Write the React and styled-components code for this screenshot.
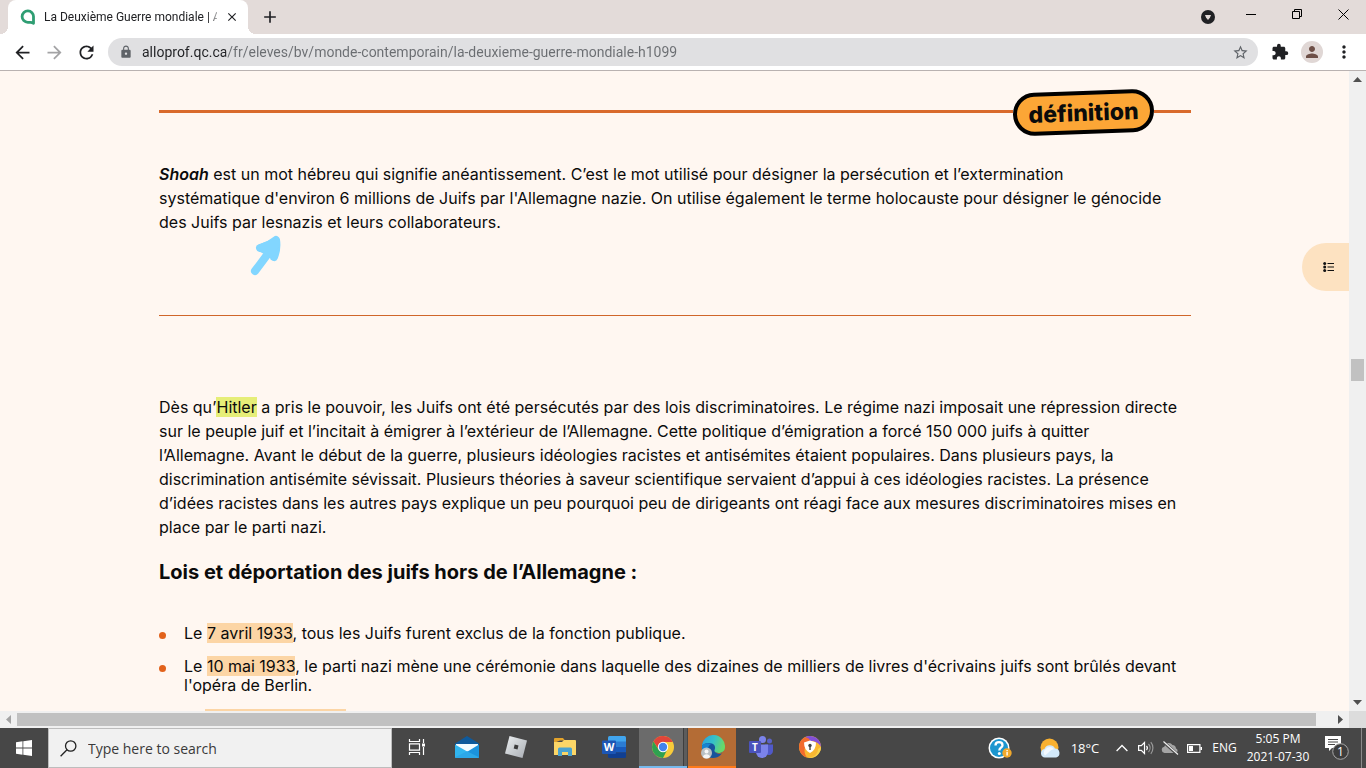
import React from 'react'
import styled, { createGlobalStyle } from 'styled-components'
import {
  MdAdd,
  MdArrowBack,
  MdArrowForward,
  MdClose,
  MdExtension,
  MdLock,
  MdMoreVert,
  MdPerson,
  MdRefresh,
  MdStarBorder,
} from 'react-icons/md'

const GlobalStyle = createGlobalStyle`
  * {
    box-sizing: border-box;
  }

  body {
    margin: 0;
    font-family: 'Open Sans', 'Noto Sans', sans-serif;
    font-size: 12px;
    color: #202124;
  }

  button {
    border: none;
    padding: 0;
    background: none;
    color: inherit;
    font: inherit;
  }

  svg {
    display: block;
    flex: none;
  }
`

const Screen = styled.div`
  height: 100vh;
  display: flex;
  flex-direction: column;
  overflow: hidden;
`

/* Browser frame */

const TitleBar = styled.header`
  height: 34px;
  flex: none;
  display: flex;
  background: #e3dbd9;
`

const TabFoot = styled.span`
  width: 8px;
  height: 8px;
  align-self: flex-end;
  background: radial-gradient(circle at ${props => props.$corner}, #e3dbd9 8px, #fff 8px);
`

const Tab = styled.div`
  width: 240px;
  padding: 0 9px 0 12px;
  display: flex;
  align-items: center;
  gap: 8px;
  background: #fff;
  border-radius: 8px 8px 0 0;
`

const TabTitle = styled.span`
  flex: 1;
  min-width: 0;
  font-family: Roboto, sans-serif;
  white-space: nowrap;
  mask-image: linear-gradient(90deg, #000 164px, transparent 178px);
`

const FrameButton = styled.button`
  width: ${props => props.$width || 28}px;
  height: 28px;
  flex: none;
  display: flex;
  align-items: center;
  justify-content: center;
  color: ${props => props.$color || '#202124'};
`

const TabClose = styled(FrameButton)`
  width: 14px;
`

const NewTab = styled(FrameButton)`
  margin: 3px auto 0 0;
`

const TabSearch = styled(FrameButton)`
  margin: 3px 6px 0 0;
`

const Toolbar = styled.nav`
  height: 37px;
  flex: none;
  display: flex;
  align-items: center;
  gap: 4px;
  padding: 0 8px;
  background: #fff;
  border-bottom: 1px solid #b9b2b1;
`

const AddressBar = styled.div`
  height: 28px;
  flex: 1;
  margin: 0 4px;
  padding: 0 9px 0 11px;
  display: flex;
  align-items: center;
  gap: 9px;
  border-radius: 14px;
  background: #e0e0e2;
  color: #5f6368;
`

const AddressInput = styled.input`
  flex: 1;
  min-width: 0;
  height: 24px;
  border: none;
  padding: 0;
  outline: none;
  font-family: Roboto, sans-serif;
  font-size: 14px;
  color: #5f6368;
  background: linear-gradient(90deg, #202124 84px, #6a6d71 84px);
  background-clip: text;
  -webkit-text-fill-color: transparent;
`

const Avatar = styled.span`
  width: 22px;
  height: 22px;
  display: flex;
  align-items: center;
  justify-content: center;
  border-radius: 50%;
  background: #e0d7d5;
  color: #6d4f47;
`

/* Page */

const Viewport = styled.div`
  flex: 1;
  min-height: 0;
  display: flex;
`

const Page = styled.main`
  position: relative;
  flex: 1;
  min-width: 0;
  overflow: hidden;
  padding: 18px 158px 0 159px;
  background: #fff7f1;
  color: #0b0b0b;
  font-family: Inter, 'Open Sans', sans-serif;
`

const DefinitionHeader = styled.div`
  display: flex;
  align-items: center;
  height: 46px;
  margin-bottom: 27px;

  &::before,
  &::after {
    content: '';
    height: 3px;
    margin-bottom: 2px;
    background: #d96a2c;
  }

  &::before {
    flex: 1;
  }

  &::after {
    width: 37px;
  }
`

const Badge = styled.strong`
  width: 141px;
  height: 43px;
  display: flex;
  align-items: center;
  justify-content: center;
  border: 4px solid #000;
  border-radius: 22px;
  background: #fca636;
  font-size: 23px;
  font-weight: 800;
  transform: rotate(-2deg);
`

const Paragraph = styled.p`
  margin: 0;
  font-size: 16px;
  line-height: 24px;
  white-space: nowrap;
`

const Term = styled.dfn`
  font-style: italic;
  font-weight: 600;
`

const Definition = styled.section`
  position: relative;
`

const Rule = styled.hr`
  height: 1px;
  margin: 81px 0 79px;
  border: none;
  background: #d0662a;
`

const Pointer = styled.svg`
  position: absolute;
  top: 72px;
  left: 90px;
`

const Heading = styled.h3`
  margin: 21px 0 40px;
  font-size: 20px;
  line-height: 24px;
  font-weight: 700;
`

const Mark = styled.mark`
  color: inherit;
  background: ${props => (props.$lime ? '#e6ee78' : '#fcd5a5')};
`

const EventList = styled.ul`
  margin: 0;
  padding: 0;
  display: grid;
  gap: 14px;
  list-style: none;
`

const Event = styled.li`
  display: flex;
  gap: 18px;
  font-size: 16px;
  line-height: 19px;
  white-space: nowrap;

  &::before {
    content: '';
    width: 7px;
    height: 7px;
    margin-top: 8px;
    flex: none;
    border-radius: 50%;
    background: #e2621b;
  }
`

const PendingMark = styled(Mark)`
  width: 141px;
  height: 19px;
  margin-left: 21px;
`

const ContentsButton = styled.button`
  position: absolute;
  top: 172px;
  right: 0;
  width: 47px;
  height: 48px;
  display: flex;
  align-items: center;
  justify-content: center;
  padding-left: 6px;
  border-radius: 24px 0 0 24px;
  background: #fde2c1;
`

const ScrollColumn = styled.div`
  width: 17px;
  flex: none;
  display: flex;
  flex-direction: column;
  align-items: center;
  background: #f0f0f0;
`

const ScrollRow = styled.div`
  height: 17px;
  flex: none;
  display: flex;
  align-items: center;
  background: #f0f0f0;
`

const ScrollButton = styled.button`
  width: 17px;
  height: 17px;
  flex: none;
  display: flex;
  align-items: center;
  justify-content: center;
`

const Spacer = styled.div`
  flex: ${props => props.$grow};
`

const VerticalThumb = styled.div`
  width: 13px;
  height: 22px;
  background: #c1c1c1;
`

const HorizontalThumb = styled.div`
  flex: 1;
  height: 13px;
  margin-right: 16px;
  background: #c1c1c1;
`

const Corner = styled.div`
  width: 17px;
  height: 17px;
  background: #dcdcdc;
`

/* Taskbar */

const Taskbar = styled.footer`
  height: 40px;
  flex: none;
  display: flex;
  background: #474747;
  color: #fff;
`

const StartButton = styled.button`
  width: 48px;
  display: flex;
  align-items: center;
  justify-content: center;
`

const SearchBox = styled.label`
  width: 344px;
  display: flex;
  align-items: center;
  gap: 11px;
  padding-left: 11px;
  background: #f1f1f1;
  border: 1px solid #bdbdbd;
`

const SearchInput = styled.input`
  flex: 1;
  min-width: 0;
  border: none;
  padding: 0;
  outline: none;
  background: none;
  font-family: 'Open Sans', sans-serif;
  font-size: 14px;

  &::placeholder {
    color: #3a3a3a;
  }
`

const Apps = styled.div`
  flex: 1;
  display: flex;
  gap: 1px;
`

const AppButton = styled.button`
  width: ${props => props.$width || 48}px;
  display: flex;
  align-items: center;
  justify-content: center;
  background: ${props => props.$fill || 'none'};
  border-bottom: 2px solid ${props => props.$line || 'transparent'};
`

const Tray = styled.div`
  display: flex;
`

const TrayItem = styled.button`
  width: ${props => props.$width || 24}px;
  display: flex;
  align-items: center;
  justify-content: center;
  gap: 10px;
  line-height: 18px;
  white-space: nowrap;
`

const Weather = styled(TrayItem)`
  font-size: 13px;
`

const ShowDesktop = styled.button`
  width: 5px;
  border-left: 1px solid #8a8a8a;
`

const ARROWS = {
  up: 'M0 5 4.500 0 9 5z',
  down: 'M0 0h9L4.500 5z',
  left: 'M5 0v9L0 4.500z',
  right: 'M0 0v9l5-4.500z',
}

const ScrollArrow = ({ to, color = '#505050' }) => (
  <ScrollButton aria-label={`Scroll ${to}`}>
    <svg
      width={to === 'up' || to === 'down' ? 9 : 5}
      height={to === 'up' || to === 'down' ? 5 : 9}
      fill={color}
    >
      <path d={ARROWS[to]} />
    </svg>
  </ScrollButton>
)

const AlloprofIcon = () => (
  <svg width="16" height="16" viewBox="0 0 16 16">
    <path
      d="M13.500 14.200V7.800A5.700 5.700 0 1 0 7.800 13.300h2.700c1 0 2 .3 3 .9z"
      fill="none"
      stroke="#2f9e73"
      strokeWidth="2.800"
      strokeLinejoin="round"
    />
  </svg>
)

const TabSearchIcon = () => (
  <svg width="14" height="14" viewBox="0 0 14 14">
    <circle cx="7" cy="7" r="7" fill="#202124" />
    <path d="M4 5h6l-1 2.500L7 10 5 7.500z" fill="#e3dbd9" />
  </svg>
)

const StartIcon = () => (
  <svg width="16" height="16" viewBox="0 0 16 16" fill="#fff">
    <path d="M0 2.200 6.500 1.300v6.200H0zM7.300 1.200 16 0v7.500H7.300zM0 8.400h6.500v6.300L0 13.800zM7.300 8.400H16V16l-8.700-1.200z" />
  </svg>
)

const SearchIcon = () => (
  <svg width="17" height="17" viewBox="0 0 17 17" fill="none" stroke="#222" strokeWidth="1.300">
    <circle cx="10.700" cy="6" r="5.200" />
    <path d="M7 9.800.6 16.200" />
  </svg>
)

const TaskViewIcon = () => (
  <svg width="18" height="16" viewBox="0 0 18 16" fill="none" stroke="#fff" strokeWidth="1.200">
    <path d="M1.500 0v2.500h10V0M1.500 16v-2.500h10V16M1.500 4.800h10v6.400h-10zM15.500 0v4M15.500 8v8" />
    <path d="M14 4.500h3v3h-3z" fill="#fff" stroke="none" />
  </svg>
)

const MailIcon = () => (
  <svg width="26" height="24" viewBox="0 0 26 24">
    <path d="M1 8.500 13 1l12 7.500v4H1z" fill="#0f5a9c" />
    <path d="M2 9h22v6l-10 5L2 15z" fill="#f3fbff" />
    <path d="M1 9.500 14 17l-9 6H2a1 1 0 0 1-1-1z" fill="#31b5ee" />
    <path d="m25 9.500-22 13.400h21a1 1 0 0 0 1-1z" fill="#1b93dd" />
    <path d="m1 22.300 12-6 12 6-.8.7H1.800z" fill="#2ca8e8" />
  </svg>
)

const RobloxIcon = () => (
  <svg width="22" height="22" viewBox="0 0 22 22">
    <defs>
      <linearGradient id="roblox" x2="1" y2="1">
        <stop stopColor="#eceff1" />
        <stop offset="1" stopColor="#a9adb3" />
      </linearGradient>
    </defs>
    <path d="M4.500 0 22 4.500 17.500 22 0 17.500z" fill="url(#roblox)" />
    <path d="m9.700 8.600 3.800 1-1 3.800-3.800-1z" fill="#3b3b3b" />
  </svg>
)

const ExplorerIcon = () => (
  <svg width="22" height="20" viewBox="0 0 22 20">
    <path d="M0 2a1 1 0 0 1 1-1h8l2 2.500h-5L0 6z" fill="#e3a32b" />
    <path d="M0 5h8l2-2h11a1 1 0 0 1 1 1v14H0z" fill="#fbd667" />
    <path d="M4 19v-7a1.500 1.500 0 0 1 1.500-1.500h11A1.500 1.500 0 0 1 18 12v7h-4v-4H8v4z" fill="#4aa3d0" />
    <path d="M8 15h6v3H8z" fill="#fbd667" />
  </svg>
)

const WordIcon = () => (
  <svg width="24" height="22" viewBox="0 0 24 22">
    <path d="M6 1.500A1.500 1.500 0 0 1 7.500 0h15A1.500 1.500 0 0 1 24 1.500V6H6z" fill="#41a5ee" />
    <path d="M6 5.500h18V11H6z" fill="#2b7cd3" />
    <path d="M6 11h18v5.500H6z" fill="#185abd" />
    <path d="M6 16.500h18v4a1.500 1.500 0 0 1-1.500 1.500h-15A1.500 1.500 0 0 1 6 20.500z" fill="#103f91" />
    <rect y="4.500" width="14" height="13.500" rx="1" fill="#1c56b5" />
    <text x="7" y="15" textAnchor="middle" fontSize="11" fontWeight="700" fill="#fff">W</text>
  </svg>
)

const ChromeIcon = () => (
  <svg width="22" height="22" viewBox="0 0 22 22">
    <circle cx="11" cy="11" r="11" fill="#f8cb3a" />
    <path d="M11 6h9.800A11 11 0 0 0 1.500 5.500L6.700 13.500z" fill="#e0453a" />
    <path d="M1.500 5.500A11 11 0 0 0 11 22l4.300-8.500L11 11l-4.500 2.500z" fill="#2fa150" />
    <circle cx="11" cy="11" r="5.200" fill="#fff" />
    <circle cx="11" cy="11" r="4.200" fill="#4383ec" />
  </svg>
)

const EdgeIcon = () => (
  <svg width="25" height="24" viewBox="0 0 25 24">
    <defs>
      <linearGradient id="edge" x2="1" y2=".3">
        <stop stopColor="#2b9fe0" />
        <stop offset=".55" stopColor="#35c1c8" />
        <stop offset="1" stopColor="#67d96a" />
      </linearGradient>
    </defs>
    <circle cx="13" cy="12" r="11" fill="#17549c" />
    <path d="M2 11a11.500 11.500 0 0 1 23 1c0 4-3 6-6.500 6-3 0-4.500-1.500-4-3 1-2 1-5-2.500-6.500C8 7 3.500 8.500 2 11z" fill="url(#edge)" />
    <path d="M2 11C4 8 8.500 7.500 11 9c-4 2-4 9 .5 13.500C5 22 1.500 17 2 11z" fill="#1684d1" />
    <path d="M14.700 15.500c.2 2 2 3.200 4.500 3.200 2 0 3.300-.3 5.300-2v-1.200c-2 2.200-4 2.500-6 2.500-2.300 0-3.500-1-3.800-2.500z" fill="#b46c35" />
    <circle cx="6.500" cy="18" r="5.500" fill="#b9c0c4" />
    <circle cx="6.500" cy="16.500" r="2" fill="#f6f6f6" />
    <path d="M2.900 22a3.700 3.700 0 0 1 7.200 0 5.500 5.500 0 0 1-7.200 0z" fill="#f6f6f6" />
  </svg>
)

const TeamsIcon = () => (
  <svg width="24" height="22" viewBox="0 0 24 22">
    <circle cx="20.500" cy="5" r="2.500" fill="#5b62c7" />
    <circle cx="13.500" cy="3.500" r="3.500" fill="#7b83eb" />
    <path d="M16 8.500h8V15a4 4 0 0 1-6 3.500z" fill="#5059c9" />
    <path d="M7 8.500h12v7.500a6 6 0 0 1-12 0z" fill="#7b83eb" />
    <rect y="5" width="12" height="12" rx="1" fill="#4b53bc" />
    <text x="6" y="14.500" textAnchor="middle" fontSize="10" fontWeight="700" fill="#fff">T</text>
  </svg>
)

const PrivacyIcon = () => (
  <svg width="22" height="22" viewBox="0 0 22 22">
    <circle cx="11" cy="11" r="11" fill="#f9b731" />
    <path d="M6 1.200A11 11 0 0 1 22 11c-2-4-6-6.500-11-6z" fill="#8250d8" />
    <path d="M6 1.200A11 11 0 0 0 8 21.500C4.500 17 4 11 11 5c0-2-2-3.500-5-3.800z" fill="#f26a2e" />
    <path d="M22 11a11 11 0 0 1-14 10.500c6 .5 11-3 11-8.500z" fill="#f6d34c" />
    <path d="M11 4.500 17 6.500c0 5-2 8.500-6 10.500-4-2-6-5.500-6-10.500z" fill="#fff" />
    <circle cx="11" cy="9.500" r="1.700" fill="#444" />
    <path d="M10.300 10h1.400v4h-1.400z" fill="#444" />
  </svg>
)

const HelpIcon = () => (
  <svg width="24" height="22" viewBox="0 0 24 22">
    <circle cx="11" cy="11" r="10.500" fill="#fff" />
    <circle cx="11" cy="11" r="9" fill="#1c96cf" />
    <path d="M7.500 8.500c0-4.500 7-4.200 7-.3 0 2.500-3.200 2.600-3.200 5.300" fill="none" stroke="#fff" strokeWidth="2.300" />
    <circle cx="11.300" cy="16.500" r="1.500" fill="#fff" />
    <circle cx="19" cy="16" r="4.700" fill="#f1a92d" />
    <path d="M18.400 15h1.400v3.500h-1.400zM18.400 13h1.400v1.300h-1.400z" fill="#fff" />
  </svg>
)

const WeatherIcon = () => (
  <svg width="21" height="20" viewBox="0 0 21 20">
    <circle cx="9.500" cy="9.500" r="9" fill="#f9b130" />
    <path d="M5 19.500a4.300 4.300 0 0 1-.6-8.500A5.800 5.800 0 0 1 15 10.500a4.600 4.600 0 0 1 1.200 9z" fill="#d3e9fa" />
    <path d="M5 17.500a4 4 0 0 1 .6-6.300A5 5 0 0 1 14 11.300c-4 0-5 4-9 6.200z" fill="#f2f9ff" />
  </svg>
)

const ChevronIcon = () => (
  <svg width="12" height="8" viewBox="0 0 12 8" fill="none" stroke="#fff" strokeWidth="1.300">
    <path d="M.6 7 6 1.500 11.400 7" />
  </svg>
)

const SpeakerIcon = () => (
  <svg width="16" height="14" viewBox="0 0 16 14" fill="none" stroke="#fff" strokeWidth="1.200">
    <path d="M.6 4.700h2.700L6.500 1.500v11L3.300 9.300H.6z" />
    <path d="M8.500 5a3 3 0 0 1 0 4" />
    <path d="M10.500 3a6 6 0 0 1 0 8M12.800 1.200a9 9 0 0 1 0 11.600" stroke="#999" />
  </svg>
)

const CloudOffIcon = () => (
  <svg width="18" height="14" viewBox="0 0 18 14">
    <path d="M3.500 12A3.200 3.200 0 0 1 3.300 5.700 4.500 4.500 0 0 1 11.500 4a4 4 0 0 1 3.500 3.500A2.400 2.400 0 0 1 15 12z" fill="#a5a5a5" />
    <path d="M2 .5 16.500 13.500" stroke="#474747" strokeWidth="3" />
    <path d="M2.500.5 17 13.500" stroke="#eee" strokeWidth="1.200" />
  </svg>
)

const BatteryIcon = () => (
  <svg width="15" height="9" viewBox="0 0 15 9">
    <path d="M.6.6h12.300v7.800H.6z" fill="none" stroke="#fff" strokeWidth="1.200" />
    <path d="M2 2h4v5H2zM13.500 3H15v3h-1.500z" fill="#fff" />
  </svg>
)

const NotificationIcon = () => (
  <svg width="24" height="24" viewBox="0 0 24 24">
    <path d="M0 0h16v12H7l-3 3v-3H0z" fill="#fff" />
    <path d="M3 3.500h10M3 6h10M3 8.500h7" stroke="#474747" />
    <circle cx="15.500" cy="15.500" r="7.800" fill="#3d3d3d" stroke="#a8a8a8" />
    <text x="15.500" y="20" textAnchor="middle" fontSize="12" fill="#fff">1</text>
  </svg>
)

const ContentsIcon = () => (
  <svg width="11" height="10" viewBox="0 0 11 10" fill="#111">
    <circle cx="1.700" cy="1.500" r="1.500" />
    <circle cx="1.700" cy="5" r="1.500" />
    <circle cx="1.700" cy="8.500" r="1.500" />
    <path d="M4.500 1H11v1H4.500zM4.500 4.500H11v1H4.500zM4.500 8H11v1H4.500z" />
  </svg>
)

const apps = [
  { name: 'Task View', icon: <TaskViewIcon />, width: 50 },
  { name: 'Mail', icon: <MailIcon /> },
  { name: 'Roblox', icon: <RobloxIcon /> },
  { name: 'File Explorer', icon: <ExplorerIcon /> },
  { name: 'Word', icon: <WordIcon /> },
  { name: 'Google Chrome', icon: <ChromeIcon />, fill: 'linear-gradient(90deg, #6b6b6b 44px, #3e3e3e 44px, #3e3e3e 45px, #5c5c5c 45px)', line: '#76b9ed' },
  { name: 'Microsoft Edge', icon: <EdgeIcon />, fill: '#b46c35', line: '#ff7a1a' },
  { name: 'Microsoft Teams', icon: <TeamsIcon /> },
  { name: 'Avast Secure Browser', icon: <PrivacyIcon /> },
]

const BrowserFrame = () => (
  <>
    <TitleBar>
      <TabFoot $corner="0 0" />
      <Tab>
        <AlloprofIcon />
        <TabTitle>La Deuxième Guerre mondiale | A</TabTitle>
        <TabClose aria-label="Close tab"><MdClose size={14} /></TabClose>
      </Tab>
      <TabFoot $corner="100% 0" />
      <NewTab aria-label="New tab"><MdAdd size={20} /></NewTab>
      <TabSearch aria-label="Search tabs"><TabSearchIcon /></TabSearch>
      <FrameButton $width={46} aria-label="Minimize">
        <svg width="10" height="1"><path d="M0 0h10v1H0z" /></svg>
      </FrameButton>
      <FrameButton $width={46} aria-label="Restore">
        <svg width="10" height="10" fill="none" stroke="#000">
          <path d="M.5 2.500h7v7h-7zM2.500 2.500v-2h7v7h-2" />
        </svg>
      </FrameButton>
      <FrameButton $width={46} aria-label="Close">
        <svg width="11" height="11" stroke="#000"><path d="m.5.5 10 10M10.500.5l-10 10" /></svg>
      </FrameButton>
    </TitleBar>
    <Toolbar>
      <FrameButton aria-label="Back"><MdArrowBack size={21} /></FrameButton>
      <FrameButton aria-label="Forward" $color="#a3a3a5"><MdArrowForward size={21} /></FrameButton>
      <FrameButton aria-label="Reload"><MdRefresh size={21} /></FrameButton>
      <AddressBar>
        <MdLock size={14} />
        <AddressInput
          aria-label="Address"
          defaultValue="alloprof.qc.ca/fr/eleves/bv/monde-contemporain/la-deuxieme-guerre-mondiale-h1099"
        />
        <MdStarBorder size={17} />
      </AddressBar>
      <FrameButton aria-label="Extensions"><MdExtension size={18} /></FrameButton>
      <FrameButton aria-label="Profile"><Avatar><MdPerson size={18} /></Avatar></FrameButton>
      <FrameButton aria-label="Menu"><MdMoreVert size={20} /></FrameButton>
    </Toolbar>
  </>
)

const Article = () => (
  <Page>
    <DefinitionHeader>
      <Badge>définition</Badge>
    </DefinitionHeader>
    <Definition>
      <Paragraph>
        <Term>Shoah</Term> est un mot hébreu qui signifie anéantissement. C’est le mot utilisé pour désigner la persécution et l’extermination<br />
        systématique d'environ 6 millions de Juifs par l'Allemagne nazie. On utilise également le terme holocauste pour désigner le génocide<br />
        des Juifs par lesnazis et leurs collaborateurs.
      </Paragraph>
      <Pointer width="36" height="44" viewBox="0 0 36 44" fill="none" stroke="#82d6ff" strokeWidth="8" strokeLinecap="round" strokeLinejoin="round">
        <path d="M6 37 21 17M11 14c3-1 9-2 16-8 1 6 0 12-2 17" />
        <path d="M12 14 27 8 22 19z" fill="#82d6ff" />
      </Pointer>
    </Definition>
    <Rule />
    <Paragraph>
      Dès qu’<Mark $lime>Hitler</Mark> a pris le pouvoir, les Juifs ont été persécutés par des lois discriminatoires. Le régime nazi imposait une répression directe<br />
      sur le peuple juif et l’incitait à émigrer à l’extérieur de l’Allemagne. Cette politique d’émigration a forcé 150 000 juifs à quitter<br />
      l’Allemagne. Avant le début de la guerre, plusieurs idéologies racistes et antisémites étaient populaires. Dans plusieurs pays, la<br />
      discrimination antisémite sévissait. Plusieurs théories à saveur scientifique servaient d’appui à ces idéologies racistes. La présence<br />
      d’idées racistes dans les autres pays explique un peu pourquoi peu de dirigeants ont réagi face aux mesures discriminatoires mises en<br />
      place par le parti nazi.
    </Paragraph>
    <Heading>Lois et déportation des juifs hors de l’Allemagne :</Heading>
    <EventList>
      <Event>
        <div>Le <Mark>7 avril 1933</Mark>, tous les Juifs furent exclus de la fonction publique.</div>
      </Event>
      <Event>
        <div>
          Le <Mark>10 mai 1933</Mark>, le parti nazi mène une cérémonie dans laquelle des dizaines de milliers de livres d'écrivains juifs sont brûlés devant<br />
          l'opéra de Berlin.
        </div>
      </Event>
      <Event>
        <PendingMark />
      </Event>
    </EventList>
    <ContentsButton aria-label="Table des matières"><ContentsIcon /></ContentsButton>
  </Page>
)

const WindowsTaskbar = () => (
  <Taskbar>
    <StartButton aria-label="Start"><StartIcon /></StartButton>
    <SearchBox>
      <SearchIcon />
      <SearchInput aria-label="Search" placeholder="Type here to search" />
    </SearchBox>
    <Apps>
      {apps.map(app => (
        <AppButton key={app.name} aria-label={app.name} $width={app.width} $fill={app.fill} $line={app.line}>
          {app.icon}
        </AppButton>
      ))}
    </Apps>
    <Tray>
      <TrayItem $width={58} aria-label="Get help"><HelpIcon /></TrayItem>
      <Weather $width={81}><WeatherIcon />18°C</Weather>
      <TrayItem aria-label="Show hidden icons"><ChevronIcon /></TrayItem>
      <TrayItem aria-label="Volume"><SpeakerIcon /></TrayItem>
      <TrayItem aria-label="OneDrive"><CloudOffIcon /></TrayItem>
      <TrayItem aria-label="Battery"><BatteryIcon /></TrayItem>
      <TrayItem $width={37}>ENG</TrayItem>
      <TrayItem $width={70}>5:05 PM<br />2021-07-30</TrayItem>
      <TrayItem $width={48} aria-label="Notifications"><NotificationIcon /></TrayItem>
      <ShowDesktop aria-label="Show desktop" />
    </Tray>
  </Taskbar>
)

const App = () => (
  <Screen>
    <GlobalStyle />
    <BrowserFrame />
    <Viewport>
      <Article />
      <ScrollColumn>
        <ScrollArrow to="up" />
        <Spacer $grow={271} />
        <VerticalThumb />
        <Spacer $grow={313} />
        <ScrollArrow to="down" />
      </ScrollColumn>
    </Viewport>
    <ScrollRow>
      <ScrollArrow to="left" color="#a3a3a3" />
      <HorizontalThumb />
      <ScrollArrow to="right" />
      <Corner />
    </ScrollRow>
    <WindowsTaskbar />
  </Screen>
)

export default App
